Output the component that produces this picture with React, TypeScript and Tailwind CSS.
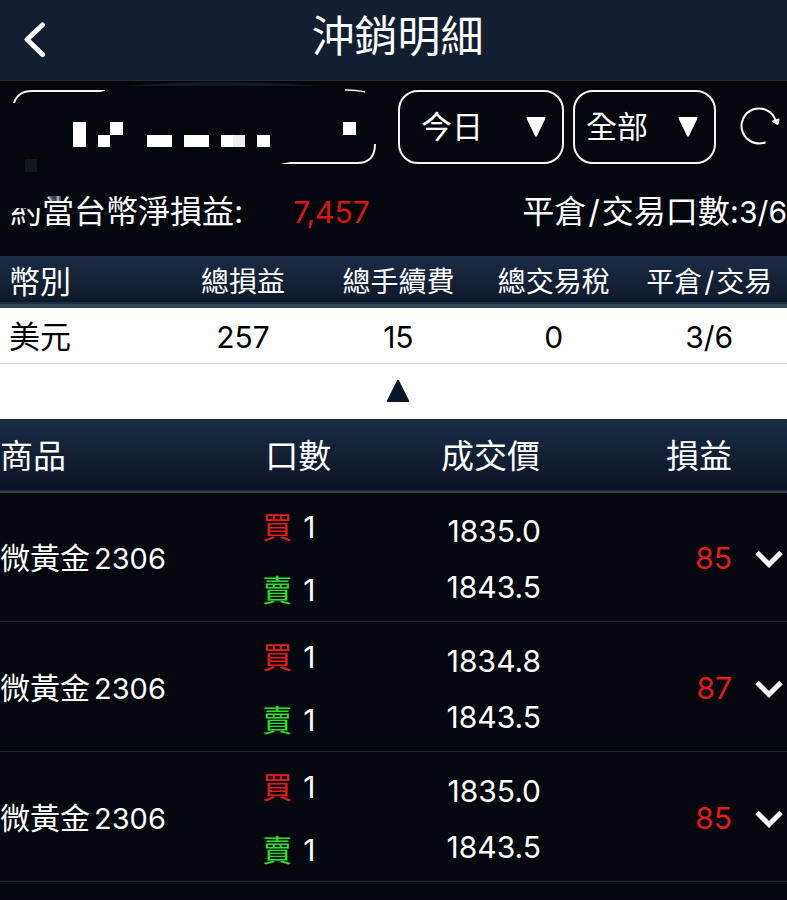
import { useState } from "react";

interface Trade {
  product: string;
  month: string;
  buyPrice: string;
  sellPrice: string;
  profit: string;
}

const TRADES: Trade[] = [
  { product: "微黃金", month: "2306", buyPrice: "1835.0", sellPrice: "1843.5", profit: "85" },
  { product: "微黃金", month: "2306", buyPrice: "1834.8", sellPrice: "1843.5", profit: "87" },
  { product: "微黃金", month: "2306", buyPrice: "1835.0", sellPrice: "1843.5", profit: "85" },
];

interface FilterProps {
  label: string;
  options: string[];
  className: string;
}

function Filter({ label, options, className }: FilterProps) {
  const [value, setValue] = useState(options[0]);

  return (
    <div className="relative shrink-0">
      <select
        aria-label={label}
        value={value}
        onChange={(e) => setValue(e.target.value)}
        className={`h-[74px] appearance-none rounded-[20px] border-2 border-gray-100 bg-transparent text-[31px] text-white ${className}`}
      >
        {options.map((o) => (
          <option key={o} value={o}>{o}</option>
        ))}
      </select>
      <svg viewBox="0 0 20 20" className="pointer-events-none absolute right-[18px] top-[27px] size-5 fill-white">
        <path d="M1.5 0h17q1.5 0 .9 1.5L11 19q-1 1.600-2 0L.6 1.500Q0 0 1.500 0z" />
      </svg>
    </div>
  );
}

// Account picker with the number blanked out
function AccountPicker() {
  return (
    <button type="button" aria-label="帳號" className="h-[74px] min-w-0 flex-1">
      <svg viewBox="0 0 364 74" className="block w-full overflow-visible">
        <path d="M110 -4Q208 -12 306 -4z" fill="#0f1a2e" />
        <g fill="none" stroke="#f3f4f6" strokeWidth="2">
          <path d="M1 13Q5 1 19 1H92" />
          <path d="M332 0Q344 0 352 2" strokeWidth="1.500" />
          <path d="M362 54Q362 73 344 73H266" />
        </g>
        <path d="M84 3L98 -1V3zM262 71L280 71.500L262 75z" fill="#04070e" />
        <g fill="#fff">
          <path d="M60 32h13v25H60zM97 32h13v13H97zM85 45h12v12H85z" />
          <path d="M134 45h25v12h-25zM171 45h25v12h-25zM208 45h12v12h-12zM244 45h13v12h-13z" />
          <path d="M330 32h13v13h-13z" />
          <path d="M220 45h12v12h-12z" fill="#ededed" />
        </g>
        <path d="M12 69h12v13H12z" fill="#17171b" />
      </svg>
    </button>
  );
}

function TradeRow({ trade }: { trade: Trade }) {
  return (
    <tr className="h-[130px] border-b border-[#1b2733] text-[30px]">
      <td className="p-0 pt-1 whitespace-nowrap">
        {trade.product}<span className="ml-1 text-[29px]">{trade.month}</span>
      </td>
      <td className="p-0 pt-1">
        <div className="flex flex-col gap-[23px] leading-10">
          <span className="flex gap-[11px]"><span className="text-[#e51a1a]">買</span>1</span>
          <span className="flex gap-[11px]"><span className="text-[#2be02b]">賣</span>1</span>
        </div>
      </td>
      <td className="p-0 pt-1 pr-0.5 text-right">
        <div className="flex flex-col gap-4 leading-10">
          <span>{trade.buyPrice}</span>
          <span>{trade.sellPrice}</span>
        </div>
      </td>
      <td className="p-0 pt-1 text-right text-[#e51a1a]">{trade.profit}</td>
      <td className="p-0 pt-1">
        <button type="button" aria-label="展開" className="ml-auto mr-1 block">
          <svg viewBox="0 0 28 18" className="h-[18px] w-7 fill-none stroke-white" strokeWidth="5">
            <path d="M2 2.500L14 14.500L26 2.500" />
          </svg>
        </button>
      </td>
    </tr>
  );
}

export default function App() {
  const [open, setOpen] = useState(true);

  return (
    <div className="min-h-screen overflow-x-hidden bg-[#04070e] font-['Inter','Noto_Sans_CJK_TC',sans-serif] text-white">
      {/* Title bar */}
      <header className="grid h-[81px] grid-cols-[80px_1fr_72px] items-center border-b border-[#2b2a30] bg-[#131e31] pb-2">
        <button type="button" aria-label="返回" className="mt-2 pl-6">
          <svg viewBox="0 0 22 36" className="h-9 w-[22px] fill-none stroke-white" strokeWidth="5" strokeLinecap="round" strokeLinejoin="round">
            <path d="M18.500 3L3 17.500L18.500 32.500" />
          </svg>
        </button>
        <h1 className="text-center text-[43px] leading-[60px]">沖銷明細</h1>
      </header>

      {/* Filters */}
      <div className="flex pt-[9px] pl-[13px]">
        <AccountPicker />
        <div className="ml-[21px] flex gap-[9px]">
          <Filter label="日期" options={["今日"]} className="w-[166px] pl-[21px]" />
          <Filter label="類別" options={["全部"]} className="w-[143px] pl-[11px]" />
        </div>
        <button type="button" aria-label="重新整理" className="ml-6 mr-[7px] shrink-0">
          <svg viewBox="0 0 40 40" className="size-10 fill-none stroke-white" strokeWidth="2">
            <path d="M25.500 35.200A17.500 17.500 0 1 1 35.500 13" />
            <path d="M33 14.500L38.500 12.500L37.500 17z" fill="#fff" strokeLinejoin="round" />
          </svg>
        </button>
      </div>

      {/* Net profit */}
      <div className="flex h-[92px] items-center whitespace-nowrap pl-[10px] pt-1 text-[32px]">
        <span className="relative">
          約當台幣淨損益:
          <span className="absolute left-0 top-0 h-5 w-[30px] bg-[#04070e]" />
          <span className="absolute left-[39px] top-2 h-[5px] w-3 bg-gray-500/60" />
        </span>
        <span className="ml-[50px] text-[30px] text-[#dc1414]">7,457</span>
        <span className="ml-auto">
          平倉<span className="mx-0.5">/</span>交易口數:<span className="text-[30px]">3/6</span>
        </span>
      </div>

      {/* Totals by currency */}
      <table className="w-full table-fixed border-collapse text-center">
        <thead>
          <tr className="h-[50px] border-b-4 border-[#304a5a] bg-linear-to-b from-[#1b2c44] to-[#0f192a] text-[28px] leading-10">
            <th className="w-[21%] p-0 pl-[9px] pt-1 text-left text-[31px] font-normal">幣別</th>
            <th className="p-0 pt-1 font-normal">總損益</th>
            <th className="p-0 pt-1 font-normal">總手續費</th>
            <th className="p-0 pt-1 font-normal">總交易稅</th>
            <th className="p-0 pt-1 font-normal">平倉<span className="mx-0.5">/</span>交易</th>
          </tr>
        </thead>
        {open && (
          <tbody className="bg-white text-[30px] text-black">
            <tr className="h-[57px] border-b border-[#d8dada] leading-10">
              <td className="p-0 pl-[9px] pt-1 text-left text-[31px]">美元</td>
              <td className="p-0 pt-1">257</td>
              <td className="p-0 pt-1">15</td>
              <td className="p-0 pt-1">0</td>
              <td className="p-0 pt-1">3/6</td>
            </tr>
          </tbody>
        )}
      </table>
      <button
        type="button"
        aria-label="收合"
        onClick={() => setOpen(!open)}
        className="flex h-[55px] w-full items-center justify-center bg-white pl-2"
      >
        <svg viewBox="0 0 24 24" className="size-6 fill-[#0d1628]">
          <path d="M11 1.500q1-1.500 2 0L23 21.500q.6 1.500-1 1.500H2q-1.600 0-1-1.500z" />
        </svg>
      </button>

      {/* Trades */}
      <table className="w-full table-fixed border-collapse text-left">
        <thead>
          <tr className="h-[73px] border-b-2 border-[#2a4152] bg-linear-to-b from-[#1b2c44] to-[#0c1424] text-[33px]">
            <th className="w-1/3 p-0 pt-1 font-normal">商品</th>
            <th className="w-[15%] p-0 pt-1 pl-[3px] font-normal">口數</th>
            <th className="p-0 pt-1 pr-[3px] text-right font-normal">成交價</th>
            <th className="w-[24%] p-0 pt-1 text-right font-normal">損益</th>
            <th className="w-[7%] p-0" />
          </tr>
        </thead>
        <tbody>
          {TRADES.map((t, i) => (
            <TradeRow key={i} trade={t} />
          ))}
        </tbody>
      </table>
    </div>
  );
}
